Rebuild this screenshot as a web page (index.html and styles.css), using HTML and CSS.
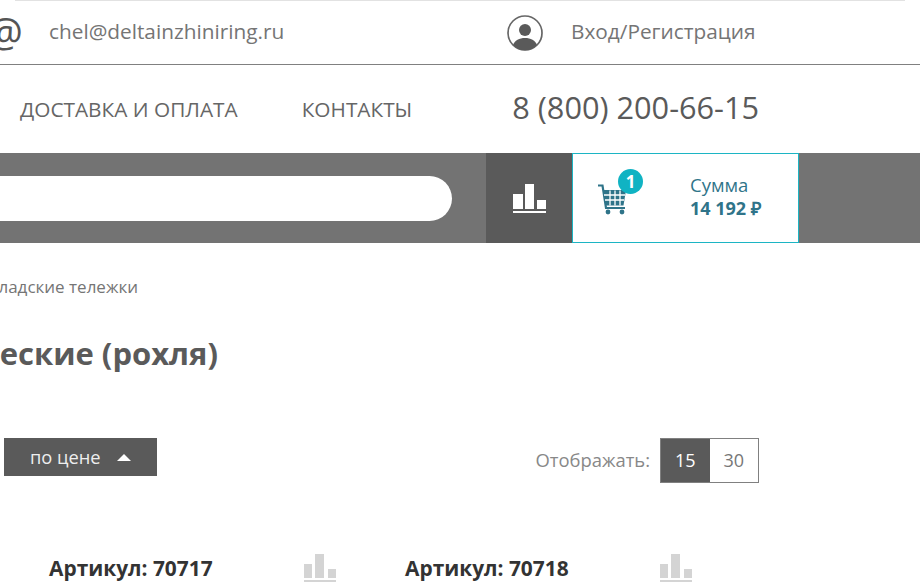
FILE: index.html
```html
<!DOCTYPE html>
<html lang="ru">
<head>
  <meta charset="UTF-8" />
  <title>Гидравлические (рохля)</title>
  <link rel="stylesheet" href="styles.css">
</head>
<body>
  <div class="page">
    <div class="top-line"></div>
    <header class="contacts">
      <div class="contact-mail">
        <span class="at-sign">@</span>
        <a class="contact-link">chel@deltainzhiniring.ru</a>
      </div>
      <div class="contact-user">
        <svg class="user-icon" width="36" height="36" viewBox="0 0 36 36">
          <circle cx="18" cy="18" r="17" fill="none" stroke="#666" stroke-width="1.700"/>
          <circle cx="18" cy="15" r="6" fill="#5a5a5a"/>
          <path d="M6 30C7.500 25.500 12.500 23 18 23S28.500 25.500 30 30C27 33.500 22.500 35.200 18 35.200S9 33.500 6 30Z" fill="#5a5a5a"/>
        </svg>
        <a class="contact-link">Вход/Регистрация</a>
      </div>
    </header>

    <nav class="main-nav">
      <a class="nav-link nav-delivery">ДОСТАВКА И ОПЛАТА</a>
      <a class="nav-link nav-contacts">КОНТАКТЫ</a>
      <span class="phone">8 (800) 200-66-15</span>
    </nav>

    <div class="search-bar">
      <div class="search-wrap"><div class="search-input"></div></div>
      <div class="compare-btn">
        <svg class="compare-icon" width="34" height="30" viewBox="0 0 34 30">
          <path d="M1 10h10v15H1zM13 0h9v25h-9zM25 16h9v9h-9zM1 27h33v2H1z" fill="#fff"/>
        </svg>
      </div>
      <div class="cart">
        <div class="cart-icon">
          <svg width="34" height="36" viewBox="0 0 34 36">
            <path d="M1 5.500h4.500l3.500 22.500h19" fill="none" stroke="#2f7489" stroke-width="2.200"/>
            <path d="M6 10h23l-2.500 15.500H8.500z" fill="#2f7489"/>
            <path d="M7 15h21M8 20h19M13 10.500v15M18 10.500v15M23 10.500v15" stroke="#fff" stroke-width="1.300"/>
            <circle cx="11" cy="32" r="2.400" fill="#2f7489"/>
            <circle cx="25" cy="32" r="2.400" fill="#2f7489"/>
          </svg>
          <span class="cart-badge">1</span>
        </div>
        <div class="cart-sum">
          <span class="cart-label">Сумма</span>
          <span class="cart-value">14 192 ₽</span>
        </div>
      </div>
    </div>

    <div class="crumbs"><span>Складские тележки</span></div>
    <div class="title-row"><h1>Гидравлические (рохля)</h1></div>

    <div class="controls">
      <a class="sort-btn">по цене <i class="sort-arrow"></i></a>
      <div class="per-page">
        <span class="per-page-label">Отображать:</span>
        <div class="per-page-opts">
          <span class="opt active">15</span>
          <span class="opt">30</span>
        </div>
      </div>
    </div>

    <div class="products">
      <div class="product">
        <span class="sku">Артикул: 70717</span>
        <svg class="compare-mini" width="34" height="30" viewBox="0 0 34 30">
          <path d="M0 11h8v14H0zM11 1h9v24h-9zM24 16h8v9h-8zM0 27h32v2H0z" fill="#d4d4d4"/>
        </svg>
      </div>
      <div class="product">
        <span class="sku">Артикул: 70718</span>
        <svg class="compare-mini" width="34" height="30" viewBox="0 0 34 30">
          <path d="M0 11h8v14H0zM11 1h9v24h-9zM24 16h8v9h-8zM0 27h32v2H0z" fill="#d4d4d4"/>
        </svg>
      </div>
    </div>
  </div>
</body>
</html>
```

FILE: styles.css
```css
html, body {
  margin: 0;
  height: 100%;
  overflow: hidden;
}
body {
  background: #fff;
  font-family: 'Open Sans', sans-serif;
  color: #5a5a5a;
}
.page {
  width: 920px;
  height: 582px;
  overflow: hidden;
}
h1 {
  margin: 0;
}

/* top contacts */
.top-line {
  height: 1px;
  margin: 0 15px;
  background: #e2e2e2;
}
.contacts {
  display: flex;
  height: 63px;
  border-bottom: 1px solid #808080;
}
.contact-mail {
  display: flex;
  align-items: center;
  width: 507px;
}
.at-sign {
  width: 55px;
  margin-left: -13px;
  margin-right: 7px;
  padding-bottom: 2px;
  font-size: 40px;
  line-height: 1;
  color: #555;
  flex: none;
}
.contact-link {
  padding-bottom: 4px;
  font-size: 20.800px;
  color: #757575;
}
.contact-user {
  display: flex;
  align-items: center;
  gap: 28px;
}

/* nav */
.main-nav {
  display: flex;
  align-items: center;
  height: 88px;
  padding-left: 20px;
}
.nav-link {
  font-size: 20.800px;
  color: #666;
}
.nav-contacts {
  margin-left: 64px;
}
.phone {
  margin-left: 100px;
  padding-bottom: 5px;
  font-size: 30.700px;
  color: #5a5a5a;
}

/* search + cart */
.search-bar {
  display: flex;
  height: 90px;
  background: #737373;
}
.search-wrap {
  width: 486px;
  display: flex;
  align-items: center;
}
.search-input {
  width: 452px;
  height: 45px;
  background: #fff;
  border-radius: 0 23px 23px 0;
}
.compare-btn {
  width: 86px;
  background: #5a5a5a;
  display: flex;
  align-items: center;
  justify-content: center;
}
.compare-icon {
  margin-top: 2px;
}
.cart {
  width: 227px;
  box-sizing: border-box;
  background: #fff;
  border: 1px solid #1cb5c4;
  display: flex;
  align-items: center;
  padding-left: 24px;
}
.cart-icon {
  position: relative;
  width: 34px;
  height: 36px;
}
.cart-badge {
  position: absolute;
  top: -11px;
  right: -12px;
  width: 25px;
  height: 25px;
  border-radius: 50%;
  background: #10b3c3;
  color: #fff;
  font-size: 17px;
  font-weight: 700;
  line-height: 25px;
  text-align: center;
}
.cart-sum {
  display: flex;
  flex-direction: column;
  margin-left: 59px;
  padding-bottom: 2px;
  color: #2f7489;
}
.cart-label {
  font-size: 18.500px;
  line-height: 22px;
}
.cart-value {
  font-size: 18px;
  line-height: 24px;
  font-weight: 700;
}

/* breadcrumbs + title */
.crumbs {
  width: 138px;
  display: flex;
  justify-content: flex-end;
  margin-top: 34px;
  font-size: 17px;
  line-height: 20px;
  color: #757575;
  white-space: nowrap;
}
.title-row {
  width: 218px;
  display: flex;
  justify-content: flex-end;
  margin-top: 38px;
  white-space: nowrap;
}
.title-row h1 {
  font-size: 31px;
  line-height: 36px;
  font-weight: 700;
  color: #5a5a5a;
}

/* sort + per page */
.controls {
  display: flex;
  justify-content: space-between;
  align-items: flex-start;
  margin-top: 67px;
  padding: 0 161px 0 4px;
}
.sort-btn {
  display: flex;
  align-items: center;
  gap: 16px;
  width: 153px;
  height: 38px;
  box-sizing: border-box;
  padding: 0 0 2px 26px;
  background: #5a5a5a;
  color: #eee;
  font-size: 18.300px;
}
.sort-arrow {
  width: 0;
  height: 0;
  margin-top: 2px;
  border-left: 7.500px solid transparent;
  border-right: 7.500px solid transparent;
  border-bottom: 7px solid #fff;
}
.per-page {
  display: flex;
  align-items: center;
  gap: 10px;
}
.per-page-label {
  font-size: 18.400px;
  color: #888;
  padding-bottom: 2px;
}
.per-page-opts {
  display: flex;
  height: 45px;
  box-sizing: border-box;
  border: 1px solid #808080;
}
.opt {
  width: 48.500px;
  font-size: 18px;
  line-height: 43px;
  text-align: center;
  color: #777;
}
.opt.active {
  background: #5a5a5a;
  color: #fff;
}

/* product row */
.products {
  display: flex;
  margin-top: 70px;
  padding-left: 49px;
}
.product {
  display: flex;
  justify-content: space-between;
  width: 289px;
  margin-right: 67px;
}
.sku {
  font-size: 20.900px;
  line-height: 30px;
  font-weight: 700;
  color: #333;
}
```
